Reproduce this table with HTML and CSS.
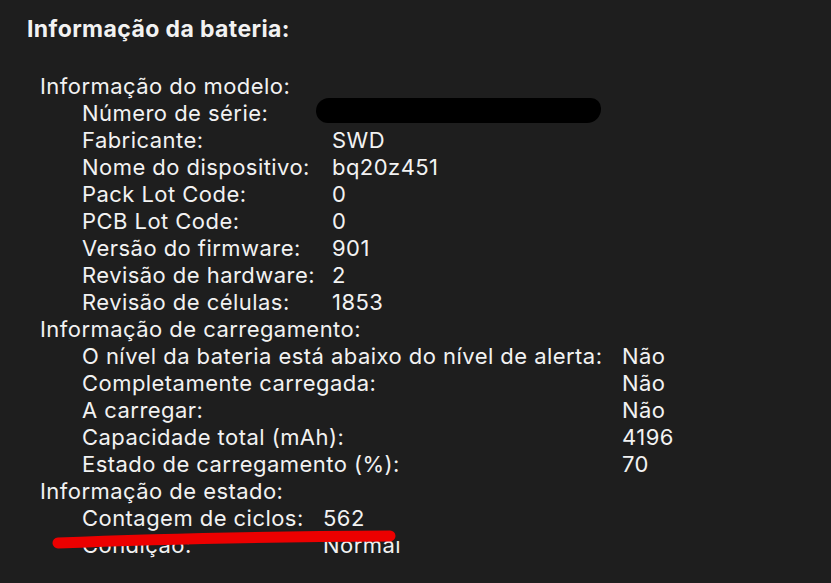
FILE: index.html
```html
<!DOCTYPE html>
<html lang="pt">
<head>
<meta charset="utf-8">
<title>Informação da bateria</title>
<link rel="stylesheet" href="styles.css">
</head>
<body>
<main class="panel">
  <h1 class="title">Informação da bateria:</h1>

  <section class="group">
    <div class="group-head">Informação do modelo:</div>
    <div class="rows rows-model">
      <div class="label">Número de série:</div><div class="value"><span class="redact"></span></div>
      <div class="label">Fabricante:</div><div class="value">SWD</div>
      <div class="label">Nome do dispositivo:</div><div class="value">bq20z451</div>
      <div class="label">Pack Lot Code:</div><div class="value">0</div>
      <div class="label">PCB Lot Code:</div><div class="value">0</div>
      <div class="label">Versão do firmware:</div><div class="value">901</div>
      <div class="label">Revisão de hardware:</div><div class="value">2</div>
      <div class="label">Revisão de células:</div><div class="value">1853</div>
    </div>
  </section>

  <section class="group">
    <div class="group-head">Informação de carregamento:</div>
    <div class="rows rows-charge">
      <div class="label">O nível da bateria está abaixo do nível de alerta:</div><div class="value">Não</div>
      <div class="label">Completamente carregada:</div><div class="value">Não</div>
      <div class="label">A carregar:</div><div class="value">Não</div>
      <div class="label">Capacidade total (mAh):</div><div class="value">4196</div>
      <div class="label">Estado de carregamento (%):</div><div class="value">70</div>
    </div>
  </section>

  <section class="group">
    <div class="group-head">Informação de estado:</div>
    <div class="rows rows-state">
      <div class="label">Contagem de ciclos:</div><div class="value">562</div>
    </div>
    <div class="clip">
      <div class="rows rows-state clip-inner">
        <div class="label">Condição:</div><div class="value">Normal</div>
      </div>
    </div>
  </section>

  <svg class="mark" width="831" height="583" viewBox="0 0 831 583" aria-hidden="true">
    <path d="M58 543 Q 200 537 390 536" fill="none" stroke="#ec0000" stroke-width="11" stroke-linecap="round"/>
  </svg>
</main>
</body>
</html>
```

FILE: styles.css
```css
html, body {
  margin: 0;
  padding: 0;
  background: #1e1e1e;
}

.panel {
  position: relative;
  width: 831px;
  height: 583px;
  overflow: hidden;
  box-sizing: border-box;
  padding: 16px 0 0 27px;
  font-family: Inter, "Noto Sans", "Liberation Sans", sans-serif;
  font-size: 22px;
  letter-spacing: 0.45px;
  line-height: 27px;
  color: #f2f2f2;
}

.title {
  margin: 0 0 30px 0;
  font-size: 23px;
  font-weight: 700;
  letter-spacing: 0.4px;
  line-height: 27px;
}

.group {
  padding-left: 13px;
}

.group-head {
  white-space: nowrap;
}

.rows {
  display: grid;
  padding-left: 42px;
  white-space: nowrap;
}

.rows-model { grid-template-columns: 250px auto; }
.rows-charge { grid-template-columns: 540px auto; }
.rows-state { grid-template-columns: 241px auto; }

.value {
  position: relative;
}

.redact {
  display: inline-block;
  vertical-align: top;
  margin: -2px 0 0 -16px;
  width: 285px;
  height: 25px;
  background: #000;
  border-radius: 13px 10px 14px 12px;
}

.clip {
  margin-top: 9px;
  height: 20px;
  overflow: hidden;
}

.clip-inner {
  margin-top: -9px;
}

.mark {
  position: absolute;
  left: 0;
  top: 0;
}
```
